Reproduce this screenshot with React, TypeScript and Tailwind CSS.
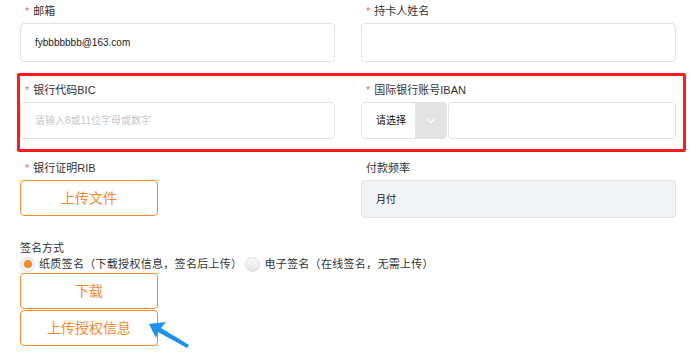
import { ChevronDown } from "lucide-react";

const font = { fontFamily: '"Liberation Sans", "Noto Sans CJK SC", sans-serif' };

function Label({ text, required = true }: { text: string; required?: boolean }) {
  return (
    <div className="flex h-[14px] items-center text-[11px] leading-[14px] text-[#333]">
      {required ? <span className="mr-[4px] ml-[5px] text-[#f56c6c]">*</span> : <span className="ml-[5px]" />}
      {text}
    </div>
  );
}

function OrangeButton({ text }: { text: string }) {
  return (
    <button className="flex h-[36px] w-[138px] items-center justify-center rounded-[4px] border border-[#f5892a] bg-white text-[14px] text-[#f5892a]">
      {text}
    </button>
  );
}

export default function App() {
  return (
    <div className="relative h-[359px] w-[699px] overflow-hidden bg-white pl-[20px] pt-[4px]" style={font}>
      {/* row 1 */}
      <div className="grid w-[656px] grid-cols-[315px_315px] gap-x-[26px]">
        <div>
          <Label text="邮箱" />
          <div className="mt-[5px] flex h-[39px] items-center rounded-[4px] border border-[#e2e2e2] px-[14px] text-[10px] text-[#222]">
            fybbbbbbb@163.com
          </div>
        </div>
        <div>
          <Label text="持卡人姓名" />
          <div className="mt-[5px] h-[39px] rounded-[4px] border border-[#e2e2e2]" />
        </div>
      </div>

      {/* row 2 */}
      <div className="relative mt-[21px] grid w-[656px] grid-cols-[315px_315px] gap-x-[26px]">
        <div className="pointer-events-none absolute -top-[10px] -bottom-[13px] -left-[3px] -right-[10px] rounded-[2px] border-[3px] border-[#ff1a1a]" />
        <div>
          <Label text="银行代码BIC" />
          <div className="mt-[5px] flex h-[37px] items-center rounded-[4px] border border-[#e2e2e2] px-[14px] text-[10px] text-[#c6c8cc]">
            请输入8或11位字母或数字
          </div>
        </div>
        <div>
          <Label text="国际银行账号IBAN" />
          <div className="mt-[5px] flex h-[37px]">
            <div className="flex w-[86px] overflow-hidden rounded-[4px] border border-[#e2e2e2]">
              <div className="flex flex-1 items-center pl-[14px] text-[10px] text-[#111]">请选择</div>
              <div className="flex w-[31px] items-center justify-center bg-[#e3e3e3]">
                <ChevronDown size={12} strokeWidth={2.5} className="text-white" />
              </div>
            </div>
            <div className="ml-[1px] flex-1 rounded-[4px] border border-[#e2e2e2]" />
          </div>
        </div>
      </div>

      {/* row 3 */}
      <div className="mt-[22px] grid w-[656px] grid-cols-[315px_315px] gap-x-[26px]">
        <div>
          <Label text="银行证明RIB" />
          <div className="mt-[5px]">
            <OrangeButton text="上传文件" />
          </div>
        </div>
        <div>
          <Label text="付款频率" required={false} />
          <div className="mt-[5px] flex h-[38px] items-center rounded-[4px] border border-[#e2e2e2] bg-[#f2f3f6] px-[14px] text-[10px] text-[#111]">
            月付
          </div>
        </div>
      </div>

      {/* signature */}
      <div className="mt-[23px] text-[11px] leading-[14px] text-[#333]">签名方式</div>
      <div className="mt-[1px] flex h-[16px] items-center text-[11px] tracking-[0.3px] text-[#333]">
        <span className="mr-[4px] flex h-[15px] w-[15px] items-center justify-center rounded-full border border-[#ddd] bg-[#f4f4f4]">
          <span className="h-[8px] w-[8px] rounded-full bg-[#f5892a]" />
        </span>
        纸质签名（下载授权信息，签名后上传）
        <span className="mr-[4px] ml-[3px] h-[15px] w-[15px] rounded-full border border-[#ddd] bg-gradient-to-b from-[#f8f8f8] to-[#e6e6e6]" />
        电子签名（在线签名，无需上传）
      </div>
      <div className="mt-[1px] flex flex-col gap-[1px]">
        <OrangeButton text="下载" />
        <OrangeButton text="上传授权信息" />
      </div>

      {/* annotation arrow */}
      <svg className="absolute left-[145px] top-[317px]" width="50" height="35" viewBox="0 0 50 35">
        <path d="M4 7 L21 5 L16 11 L44 28 L42 31 L13 15 L11 21 Z" fill="#1e90f0" />
      </svg>
    </div>
  );
}
